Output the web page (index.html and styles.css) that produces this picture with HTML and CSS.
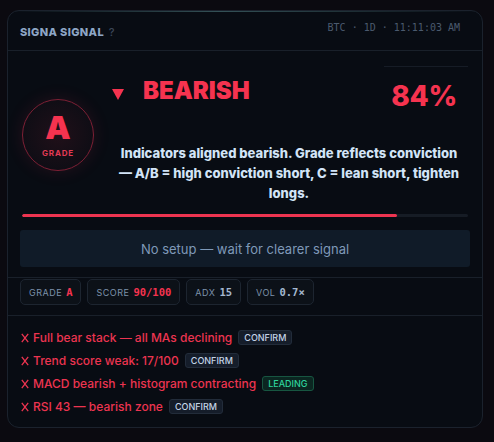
FILE: index.html
```html
<!DOCTYPE html>
<html lang="en">
<head>
<meta charset="utf-8">
<title>Signa Signal</title>
<link rel="stylesheet" href="styles.css">
</head>
<body>
<div class="card">
  <div class="header">
    <div class="title">SIGNA SIGNAL <span class="help">?</span></div>
    <div class="meta">BTC · 1D · 11:11:03 AM</div>
  </div>
  <div class="main">
    <div class="hero">
      <div class="grade">
        <div class="grade-letter">A</div>
        <div class="grade-label">GRADE</div>
      </div>
      <div class="hero-body">
        <div class="hero-top">
          <div class="dir">
            <svg class="tri" width="12" height="12" viewBox="0 0 12 12"><polygon points="0,1 12,1 6,12" fill="#f5334f"/></svg>
            <span class="dir-text">BEARISH</span>
          </div>
          <div class="pct">84%</div>
        </div>
        <p class="desc">Indicators aligned bearish. Grade reflects conviction — A/B = high conviction short, C = lean short, tighten longs.</p>
      </div>
    </div>
    <div class="bar"><div class="bar-fill" style="width:84%"></div></div>
    <div class="setup">No setup — wait for clearer signal</div>
  </div>
  <div class="pills">
    <div class="pill"><span class="pill-label">GRADE</span><span class="pill-val red">A</span></div>
    <div class="pill"><span class="pill-label">SCORE</span><span class="pill-val red">90/100</span></div>
    <div class="pill"><span class="pill-label">ADX</span><span class="pill-val">15</span></div>
    <div class="pill"><span class="pill-label">VOL</span><span class="pill-val">0.7×</span></div>
  </div>
  <div class="signals">
    <div class="sig"><svg class="x" width="8" height="10" viewBox="0 0 8 10"><path d="M0.8 0.8 L7.2 9.2 M7.2 0.8 L0.8 9.2" stroke="#ec3450" stroke-width="1.3" fill="none"/></svg><span class="sig-text">Full bear stack — all MAs declining</span><span class="tag">CONFIRM</span></div>
    <div class="sig"><svg class="x" width="8" height="10" viewBox="0 0 8 10"><path d="M0.8 0.8 L7.2 9.2 M7.2 0.8 L0.8 9.2" stroke="#ec3450" stroke-width="1.3" fill="none"/></svg><span class="sig-text">Trend score weak: 17/100</span><span class="tag">CONFIRM</span></div>
    <div class="sig"><svg class="x" width="8" height="10" viewBox="0 0 8 10"><path d="M0.8 0.8 L7.2 9.2 M7.2 0.8 L0.8 9.2" stroke="#ec3450" stroke-width="1.3" fill="none"/></svg><span class="sig-text">MACD bearish + histogram contracting</span><span class="tag tag-lead">LEADING</span></div>
    <div class="sig"><svg class="x" width="8" height="10" viewBox="0 0 8 10"><path d="M0.8 0.8 L7.2 9.2 M7.2 0.8 L0.8 9.2" stroke="#ec3450" stroke-width="1.3" fill="none"/></svg><span class="sig-text">RSI 43 — bearish zone</span><span class="tag">CONFIRM</span></div>
  </div>
</div>
</body>
</html>
```

FILE: styles.css
```css
* { box-sizing: border-box; }
html, body { margin: 0; }
body {
  background: #0b0a10;
  padding: 10px 11px 14px 7px;
  font-family: Inter, "Noto Sans", sans-serif;
  width: 494px;
  height: 442px;
  overflow: hidden;
}
.card {
  position: relative;
  width: 476px;
  height: 418px;
  background: #080c13;
  border: 1px solid #1b222d;
  border-radius: 12px;
  overflow: hidden;
}
.card::before {
  content: "";
  position: absolute;
  top: 0; left: 0; right: 0;
  height: 1px;
  background: linear-gradient(90deg, rgba(60,90,100,0) 0%, rgba(70,110,115,0.7) 45%, rgba(60,90,100,0) 100%);
}
.header {
  height: 40px;
  border-bottom: 1px solid #19202a;
  display: flex;
  justify-content: space-between;
  align-items: flex-start;
  padding: 0 22px 0 12px;
}
.title {
  margin-top: 14px;
  font-size: 11px;
  font-weight: 800;
  letter-spacing: 0.35px;
  color: #8ea6c6;
}
.help { color: #3b4758; font-weight: 500; letter-spacing: 0; margin-left: 2px; }
.meta {
  margin-top: 11px;
  font-family: "DejaVu Sans Mono", monospace;
  font-size: 10px;
  color: #4b5a6e;
}
.main {
  padding: 0 12px 10px;
  border-bottom: 1px solid #19202a;
}
.hero {
  display: flex;
  height: 163px;
}
.grade {
  margin: 48px 0 0 2px;
  width: 72px;
  height: 72px;
  border-radius: 50%;
  border: 1.5px solid #7e2035;
  background: radial-gradient(circle, rgba(245,51,79,0.10) 0%, rgba(245,51,79,0.03) 70%);
  box-shadow: 0 0 18px rgba(245,51,79,0.12);
  display: flex;
  flex-direction: column;
  align-items: center;
  flex-shrink: 0;
}
.grade-letter {
  margin-top: 12px;
  font-size: 32px;
  line-height: 32px;
  font-weight: 900;
  color: #f5334f;
}
.grade-label {
  margin-top: 4px;
  font-size: 8px;
  font-weight: 700;
  letter-spacing: 0.8px;
  color: #e23a55;
}
.hero-body {
  flex: 1;
  margin: 0 2px 0 16px;
}
.hero-top {
  display: flex;
  justify-content: space-between;
  align-items: flex-start;
  height: 92px;
}
.dir { display: flex; align-items: flex-start; margin-top: 25px; }
.tri { display: block; margin: 12px 0 0 2px; }
.dir-text {
  margin-left: 19px;
  font-size: 24px;
  line-height: 30px;
  font-weight: 900;
  color: #f5334f;
}
.pct {
  margin-top: 15px;
  width: 84px;
  border-top: 1px solid #161c26;
  text-align: right;
  padding-right: 11px;
  padding-top: 14px;
  font-size: 28px;
  line-height: 30px;
  font-weight: 800;
  letter-spacing: -0.3px;
  color: #f5334f;
}
.desc {
  margin: 0;
  padding: 0 4px;
  text-align: center;
  font-size: 13px;
  line-height: 20px;
  font-weight: 800;
  color: #d2e4f7;
}
.bar {
  margin: 0 2px;
  height: 3px;
  border-radius: 2px;
  background: #161c25;
  overflow: hidden;
}
.bar-fill { height: 100%; background: #ec3450; border-radius: 2px; }
.setup {
  margin-top: 13px;
  height: 37px;
  background: #101b28;
  border-radius: 3px;
  display: flex;
  align-items: center;
  justify-content: center;
  font-size: 13px;
  color: #7f99b8;
}
.pills {
  display: flex;
  gap: 6px;
  padding: 1px 12px 10px;
  border-bottom: 1px solid #19202a;
}
.pill {
  height: 26px;
  padding: 0 8px 0 8px;
  border: 1px solid #1d2530;
  background: #0c1118;
  border-radius: 5px;
  display: flex;
  align-items: center;
  gap: 4px;
}
.pill-label {
  font-size: 9px;
  letter-spacing: 0.5px;
  color: #7d91ab;
}
.pill-val {
  font-family: "DejaVu Sans Mono", monospace;
  font-size: 10.5px;
  font-weight: 700;
  color: #a4b8d0;
}
.pill-val.red { color: #f5334f; }
.signals {
  padding: 10px 12px 0 13px;
}
.sig {
  height: 23px;
  display: flex;
  align-items: center;
  font-size: 12px;
  font-weight: 500;
  color: #ec3450;
}
.x { display: block; margin-right: 4px; }
.tag {
  margin-left: 6px;
  height: 15px;
  padding: 0 5px;
  display: flex;
  align-items: center;
  font-size: 9px;
  font-weight: 500;
  color: #c3d3e6;
  background: #151d2a;
  border: 1px solid #222c3a;
  border-radius: 3px;
}
.tag-lead {
  color: #2fd39c;
  background: #0b2621;
  border-color: #175641;
}
```
